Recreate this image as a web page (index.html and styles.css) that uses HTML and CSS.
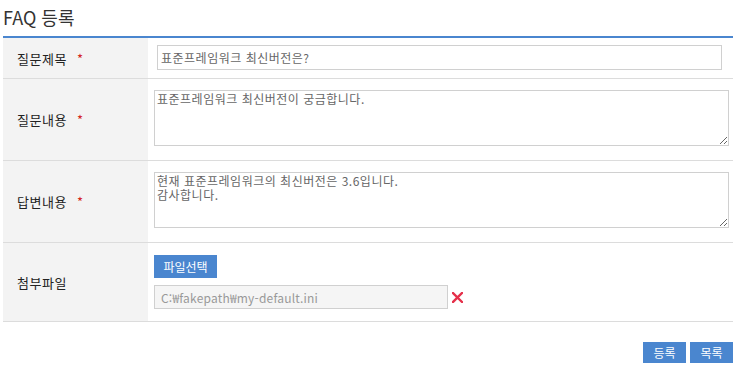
FILE: index.html
```html
<!DOCTYPE html>
<html lang="ko">
<head>
  <meta charset="UTF-8">
  <meta name="viewport" content="width=device-width, initial-scale=1.0">
  <title>FAQ 등록</title>
  <link rel="stylesheet" href="styles.css">
</head>
<body>
  <div class="board-container">
    <h2 class="board-title">FAQ 등록</h2>

    <table class="board-write">
      <tr>
        <th>질문제목 <span class="req">*</span></th>
        <td><input type="text" class="txt-title" value="표준프레임워크 최신버전은?"></td>
      </tr>
      <tr class="tall">
        <th>질문내용 <span class="req">*</span></th>
        <td><textarea class="txt-area">표준프레임워크 최신버전이 궁금합니다.</textarea></td>
      </tr>
      <tr class="tall">
        <th>답변내용 <span class="req">*</span></th>
        <td><textarea class="txt-area">현재 표준프레임워크의 최신버전은 3.6입니다.
감사합니다.</textarea></td>
      </tr>
      <tr>
        <th>첨부파일</th>
        <td class="file-cell">
          <button type="button" class="btn-blue btn-file">파일선택</button>
          <div class="file-row">
            <input type="text" class="txt-file" value="C:₩fakepath₩my-default.ini" readonly>
            <button type="button" class="btn-del" title="삭제">
              <svg width="11" height="11" viewBox="0 0 11 11">
                <path d="M1 1 L10 10 M10 1 L1 10" stroke="#e5304a" stroke-width="2.4" stroke-linecap="square"/>
              </svg>
            </button>
          </div>
        </td>
      </tr>
    </table>

    <div class="board-btns">
      <button type="button" class="btn-blue">등록</button>
      <button type="button" class="btn-blue">목록</button>
    </div>
  </div>
</body>
</html>
```

FILE: styles.css
```css
body {
  margin: 0;
  padding: 0 8px 0 3px;
  background: #fff;
  color: #222;
  font-family: 'Noto Sans CJK KR', 'Liberation Sans', sans-serif;
}

.board-container {
  width: 730px;
}

.board-title {
  margin: 0;
  padding-top: 4px;
  height: 32px;
  line-height: 26px;
  font-size: 18px;
  font-weight: normal;
  color: #333;
}

.board-write {
  width: 100%;
  border-collapse: collapse;
  border-top: 2px solid #4a86cf;
}

.board-write th {
  width: 131px;
  padding: 0 0 0 14px;
  background: #f3f3f3;
  border-bottom: 1px solid #dcdcdc;
  text-align: left;
  font-size: 13px;
  font-weight: normal;
  letter-spacing: 0.5px;
  color: #222;
  vertical-align: middle;
}

.board-write td {
  padding: 7px 0 8px 6px;
  border-bottom: 1px solid #dcdcdc;
}

.board-write tr.tall td {
  padding: 11px 0 14px 6px;
}

.req {
  margin-left: 6px;
  color: #d41f1f;
}

.txt-title,
.txt-area,
.txt-file {
  display: block;
  box-sizing: border-box;
  border: 1px solid #d0d0d0;
  font-family: 'Noto Sans CJK KR', 'Liberation Sans', sans-serif;
  font-size: 12px;
  letter-spacing: 0.5px;
  color: #666;
  outline: none;
}

.txt-title {
  margin-left: 3px;
  width: 565px;
  height: 25px;
  padding: 0 3px;
}

.txt-area {
  width: 575px;
  height: 56px;
  padding: 1px 2px;
  line-height: 14px;
  resize: vertical;
}

.board-write td.file-cell {
  padding: 12px 0 12px 6px;
}

.btn-blue {
  background: #4a86cf;
  border: none;
  color: #fff;
  font-family: 'Noto Sans CJK KR', 'Liberation Sans', sans-serif;
  font-size: 12px;
  cursor: pointer;
}

.btn-file {
  display: block;
  width: 63px;
  height: 23px;
  padding: 0;
}

.file-row {
  display: flex;
  align-items: center;
  gap: 4px;
  margin-top: 7px;
}

.txt-file {
  width: 294px;
  height: 24px;
  padding: 0 6px;
  background: #f5f5f5;
  color: #999;
  letter-spacing: 0.2px;
}

.btn-del {
  display: flex;
  padding: 0;
  border: none;
  background: none;
  cursor: pointer;
}

.board-btns {
  display: flex;
  justify-content: flex-end;
  gap: 4px;
  margin-top: 20px;
}

.board-btns .btn-blue {
  width: 43px;
  height: 21px;
  padding: 0;
}
```
